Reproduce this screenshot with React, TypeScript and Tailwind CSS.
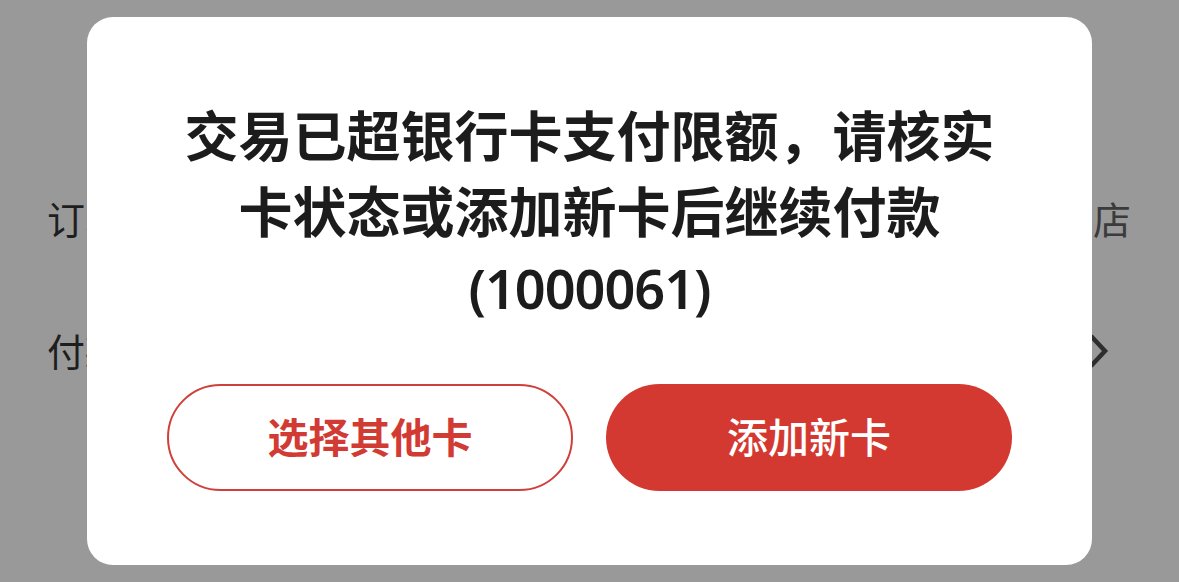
import React from "react";

const font = { fontFamily: '"Noto Sans", "Noto Sans CJK SC", sans-serif' };

export default function App() {
  return (
    <div className="relative h-[582px] w-[1179px] overflow-hidden bg-[#999999]" style={font}>
      {/* Page behind the mask */}
      <div className="flex flex-col pl-[47px] pr-[48px] pt-[196px]">
        <div className="flex h-[46px] items-center justify-between text-[38px] leading-none">
          <span className="text-[#1e1e1e]">订单信息</span>
          <span className="text-[#3b3b3b]">门店</span>
        </div>
        <div className="mt-[86px] flex h-[46px] items-center justify-between text-[38px] leading-none">
          <span className="text-[#1e1e1e]">付款方式</span>
          <svg width="24" height="40" viewBox="0 0 24 40" className="mr-[20px]">
            <path d="M4 5 L18 20 L4 35" fill="none" stroke="#2e2e2e" strokeWidth="4.5" />
          </svg>
        </div>
      </div>

      {/* Dialog */}
      <div className="absolute left-[87px] top-[17px] flex h-[548px] w-[1005px] flex-col rounded-[26px] bg-white px-[80px] pt-[81px]">
        <p className="text-center text-[54px] font-bold leading-[76px] text-[#1c1c1c]">
          交易已超银行卡支付限额，请核实
          <br />
          卡状态或添加新卡后继续付款
          <br />
          <span className="font-semibold tracking-[-1px]">(1000061)</span>
        </p>
        <div className="mt-[58px] flex gap-[33px]">
          <button className="flex h-[107px] w-[406px] items-center justify-center rounded-full border-[2.5px] border-[#d0403a] text-[41px] font-bold text-[#d13b33]">
            选择其他卡
          </button>
          <button className="flex h-[107px] w-[406px] items-center justify-center rounded-full bg-[#d33931] text-[41px] font-medium text-white">
            添加新卡
          </button>
        </div>
      </div>
    </div>
  );
}
